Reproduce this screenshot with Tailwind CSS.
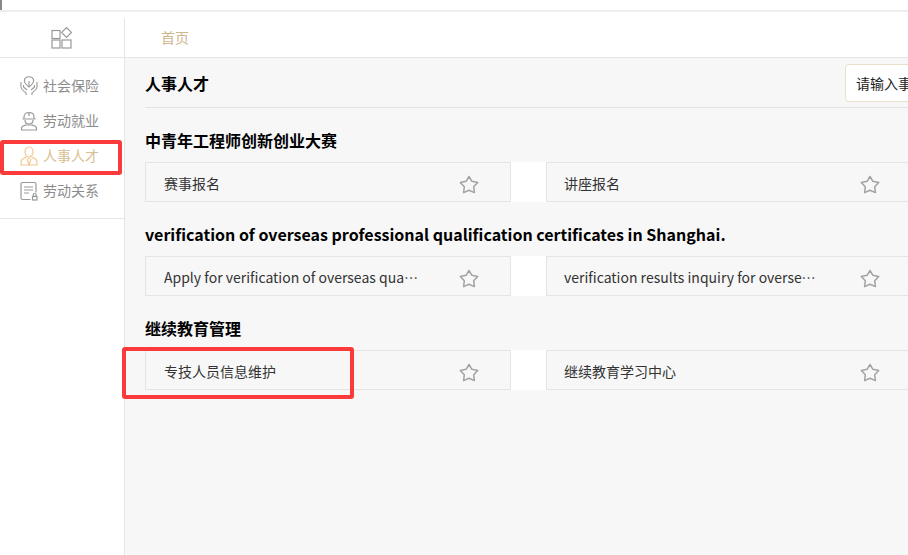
<!DOCTYPE html>
<html><head><meta charset="utf-8">
<script src="https://cdn.jsdelivr.net/npm/@tailwindcss/browser@4"></script>
</head>
<body class="relative w-[908px] h-[555px] overflow-hidden bg-white font-['Noto_Sans_CJK_SC',sans-serif]">
<div class="h-[10px] bg-white"><div class="w-[2px] h-[10px] bg-[#888]"></div></div>
<div class="h-[2px] bg-[#eeeeee]"></div>
<div class="h-[6px]"></div>
<div class="flex h-[537px]">
  <aside class="w-[125px] shrink-0 border-r border-[#e5e5e5] bg-white">
    <div class="h-[40px] border-b border-[#e5e5e5] flex items-center justify-center">
      <svg width="22" height="22" viewBox="0 0 22 22" fill="none" stroke="#999" stroke-width="1.2"><rect x="1" y="3.500" width="8" height="8"/><rect x="1" y="13" width="8" height="8"/><rect x="11" y="13" width="9" height="8"/><rect x="12" y="2" width="7" height="7" transform="rotate(45 15.500 5.500)"/></svg>
    </div>
    <nav class="h-[161px] border-b border-[#e5e5e5] pt-[10px] flex flex-col text-[14px] text-[#8c8c8c]">
      <div class="h-[35px] flex items-center pl-[20px] gap-[5px]">
        <svg width="18" height="20" viewBox="0 0 18 20" fill="none" stroke="#999" stroke-width="1.1"><path d="M9 11 C5 8 4 5.500 4.500 3.500 C5.500 1 8 .8 9 .8 C10 .8 12.500 1 13.500 3.500 C14 5.500 13 8 9 11Z"/><path d="M9 11 V5 M1 6 V11 C1 14 4 15 6 17 V19 M17 6 V11 C17 14 14 15 12 17 V19 M3.500 9 V11 L7 14 M14.500 9 V11 L11 14"/></svg>
        <span>社会保险</span>
      </div>
      <div class="h-[35px] flex items-center pl-[20px] gap-[5px]">
        <svg width="18" height="20" viewBox="0 0 18 20" fill="none" stroke="#999" stroke-width="1.2"><path d="M4 8 V6 C4 3 6 1.500 9 1.500 C12 1.500 14 3 14 6 V8 M2.500 8 H15.500 M9 1.500 V5"/><path d="M5 9 C5 12 7 13 9 13 C11 13 13 12 13 9"/><path d="M1.500 19 V17 C1.500 15 4 14.500 6 14 H12 C14 14.500 16.500 15 16.500 17 V19 Z"/></svg>
        <span>劳动就业</span>
      </div>
      <div class="h-[35px] flex items-center pl-[20px] gap-[5px] text-[#d9bf91]">
        <svg width="18" height="20" viewBox="0 0 18 20" fill="none" stroke="#f2c88f" stroke-width="1.2"><ellipse cx="9" cy="6" rx="4" ry="5"/><path d="M6.500 11 C4 12 1 13 1 16 V19 H17 V16 C17 13 14 12 11.500 11 M7 13 L9 19 L11 13 M8 12.500 H10"/></svg>
        <span>人事人才</span>
      </div>
      <div class="h-[35px] flex items-center pl-[20px] gap-[5px]">
        <svg width="18" height="20" viewBox="0 0 18 20" fill="none" stroke="#999" stroke-width="1.2"><path d="M10.500 18.500 H2.500 C1.500 18.500 1 18 1 17 V3 C1 2 1.500 1.500 2.500 1.500 H14.500 C15.500 1.500 16 2 16 3 V11.500"/><path d="M4 6 H13 M4 9 H13 M4 12 H9"/><rect x="12.500" y="15.500" width="4.500" height="3.500"/><circle cx="14.700" cy="14" r="1.500"/></svg>
        <span>劳动关系</span>
      </div>
    </nav>
  </aside>
  <main class="flex-1 min-w-0 bg-[#f7f7f7]">
    <div class="h-[40px] bg-white border-b border-[#e5e5e5] flex items-center pl-[36px] text-[14px] text-[#cfb68c]">首页</div>
    <div class="pl-[20px]">
      <div class="h-[50px] border-b border-[#e2e2e2] flex items-center justify-between">
        <h1 class="text-[16px] font-bold text-black">人事人才</h1>
        <div class="w-[100px] -mr-[37px] shrink-0 h-[38px] overflow-hidden whitespace-nowrap bg-white border border-[#eadfc8] rounded-[4px] flex items-center pl-[10px] pt-[2px] text-[14px] text-[#222]">请输入事项名称</div>
      </div>
      <section class="mt-[22px]">
        <h2 class="h-[22px] pb-[2px] flex items-center text-[16px] font-bold text-black">中青年工程师创新创业大赛</h2>
        <div class="mt-[10px] flex h-[40px] w-[800px]">
          <div class="w-[366px] shrink-0 border border-[#e5e5e5] flex items-center justify-between pl-[18px] pr-[31px] text-[14px] text-[#333]"><span class="w-[255px] truncate pt-[2px]">赛事报名</span><svg class="mt-[5px]" width="20" height="20" viewBox="0 0 20 20" fill="none" stroke="#a3a3a3" stroke-width="1.5" stroke-linejoin="round"><path d="M10 1.500 L12.900 6.300 L18.700 7.600 L14.700 11.800 L15.400 17.600 L10 15.200 L4.600 17.600 L5.300 11.800 L1.300 7.600 L7.100 6.300 Z"/></svg></div>
          <div class="w-[35px] shrink-0 bg-white"></div>
          <div class="w-[366px] shrink-0 border border-[#e5e5e5] flex items-center justify-between pl-[17px] pr-[31px] text-[14px] text-[#333]"><span class="w-[255px] truncate pt-[2px]">讲座报名</span><svg class="mt-[5px]" width="20" height="20" viewBox="0 0 20 20" fill="none" stroke="#a3a3a3" stroke-width="1.5" stroke-linejoin="round"><path d="M10 1.500 L12.900 6.300 L18.700 7.600 L14.700 11.800 L15.400 17.600 L10 15.200 L4.600 17.600 L5.300 11.800 L1.300 7.600 L7.100 6.300 Z"/></svg></div>
        </div>
      </section>
      <section class="mt-[22px]">
        <h2 class="h-[22px] pb-[2px] flex items-center text-[16px] font-bold text-black whitespace-nowrap">verification of overseas professional qualification certificates in Shanghai.</h2>
        <div class="mt-[10px] flex h-[40px] w-[800px]">
          <div class="w-[366px] shrink-0 border border-[#e5e5e5] flex items-center justify-between pl-[18px] pr-[31px] text-[14px] text-[#333]"><span class="w-[255px] truncate pt-[2px]">Apply for verification of overseas qualification certificates</span><svg class="mt-[5px]" width="20" height="20" viewBox="0 0 20 20" fill="none" stroke="#a3a3a3" stroke-width="1.5" stroke-linejoin="round"><path d="M10 1.500 L12.900 6.300 L18.700 7.600 L14.700 11.800 L15.400 17.600 L10 15.200 L4.600 17.600 L5.300 11.800 L1.300 7.600 L7.100 6.300 Z"/></svg></div>
          <div class="w-[35px] shrink-0 bg-white"></div>
          <div class="w-[366px] shrink-0 border border-[#e5e5e5] flex items-center justify-between pl-[17px] pr-[31px] text-[14px] text-[#333]"><span class="w-[255px] truncate pt-[2px]">verification results inquiry for overseas qualification</span><svg class="mt-[5px]" width="20" height="20" viewBox="0 0 20 20" fill="none" stroke="#a3a3a3" stroke-width="1.5" stroke-linejoin="round"><path d="M10 1.500 L12.900 6.300 L18.700 7.600 L14.700 11.800 L15.400 17.600 L10 15.200 L4.600 17.600 L5.300 11.800 L1.300 7.600 L7.100 6.300 Z"/></svg></div>
        </div>
      </section>
      <section class="mt-[22px]">
        <h2 class="h-[22px] pb-[2px] flex items-center text-[16px] font-bold text-black">继续教育管理</h2>
        <div class="mt-[10px] flex h-[40px] w-[800px]">
          <div class="w-[366px] shrink-0 border border-[#e5e5e5] flex items-center justify-between pl-[18px] pr-[31px] text-[14px] text-[#333]"><span class="w-[255px] truncate pt-[2px]">专技人员信息维护</span><svg class="mt-[5px]" width="20" height="20" viewBox="0 0 20 20" fill="none" stroke="#a3a3a3" stroke-width="1.5" stroke-linejoin="round"><path d="M10 1.500 L12.900 6.300 L18.700 7.600 L14.700 11.800 L15.400 17.600 L10 15.200 L4.600 17.600 L5.300 11.800 L1.300 7.600 L7.100 6.300 Z"/></svg></div>
          <div class="w-[35px] shrink-0 bg-white"></div>
          <div class="w-[366px] shrink-0 border border-[#e5e5e5] flex items-center justify-between pl-[17px] pr-[31px] text-[14px] text-[#333]"><span class="w-[255px] truncate pt-[2px]">继续教育学习中心</span><svg class="mt-[5px]" width="20" height="20" viewBox="0 0 20 20" fill="none" stroke="#a3a3a3" stroke-width="1.5" stroke-linejoin="round"><path d="M10 1.500 L12.900 6.300 L18.700 7.600 L14.700 11.800 L15.400 17.600 L10 15.200 L4.600 17.600 L5.300 11.800 L1.300 7.600 L7.100 6.300 Z"/></svg></div>
        </div>
      </section>
    </div>
  </main>
</div>
<div class="absolute left-[0px] top-[140px] w-[122px] h-[35px] border-[4px] border-[#fb3b3b] rounded-[3px]"></div>
<div class="absolute left-[122px] top-[347px] w-[232px] h-[52px] border-[4px] border-[#fb3b3b] rounded-[3px]"></div>
</body></html>
